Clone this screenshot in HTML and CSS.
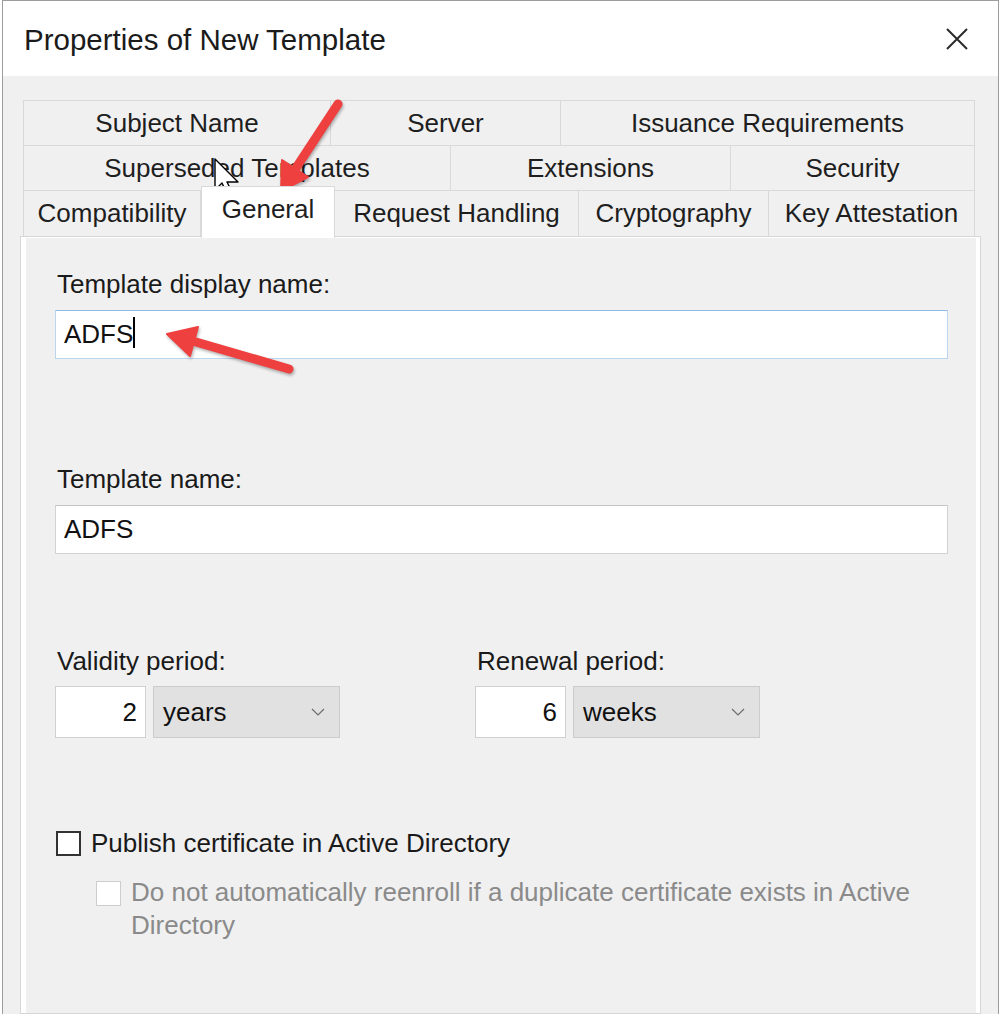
FILE: index.html
```html
<!DOCTYPE html>
<html>
<head>
<meta charset="utf-8">
<title>Properties of New Template</title>
<link rel="stylesheet" href="styles.css">
</head>
<body>
<div class="window">
  <div class="titlebar">
    <span class="title">Properties of New Template</span>
    <svg class="close" width="22" height="22" viewBox="0 0 22 22"><path d="M1 1 L21 21 M21 1 L1 21" stroke="#2b2b2b" stroke-width="2" fill="none"/></svg>
  </div>
  <div class="client">
    <div class="tabs">
      <div class="tabrow">
        <div class="tab w307">Subject Name</div>
        <div class="tab w230">Server</div>
        <div class="tab w414">Issuance Requirements</div>
      </div>
      <div class="tabrow">
        <div class="tab w427">Superseded Templates</div>
        <div class="tab w280">Extensions</div>
        <div class="tab w244">Security</div>
      </div>
      <div class="tabrow last">
        <div class="tab w177">Compatibility</div>
        <div class="tab w134 selected">General</div>
        <div class="tab w244">Request Handling</div>
        <div class="tab w190">Cryptography</div>
        <div class="tab w206">Key Attestation</div>
      </div>
    </div>
    <div class="panel">
      <div class="label">Template display name:</div>
      <div class="field focused first">ADFS<span class="caret"></span></div>
      <div class="label gap-lg">Template name:</div>
      <div class="field first">ADFS</div>
      <div class="periods">
        <div class="period">
          <div class="label">Validity period:</div>
          <div class="controls">
            <div class="spin">2</div>
            <div class="select"><span>years</span><svg width="14" height="8" viewBox="0 0 14 8"><polyline points="1,1 7,7 13,1" fill="none" stroke="#6d6d6d" stroke-width="1.2"/></svg></div>
          </div>
        </div>
        <div class="period">
          <div class="label">Renewal period:</div>
          <div class="controls">
            <div class="spin">6</div>
            <div class="select"><span>weeks</span><svg width="14" height="8" viewBox="0 0 14 8"><polyline points="1,1 7,7 13,1" fill="none" stroke="#6d6d6d" stroke-width="1.2"/></svg></div>
          </div>
        </div>
      </div>
      <div class="check1">
        <span class="box"></span>
        <span class="check-label">Publish certificate in Active Directory</span>
      </div>
      <div class="check2">
        <span class="box disabled"></span>
        <span class="check-label dim">Do not automatically reenroll if a duplicate certificate exists in Active Directory</span>
      </div>
    </div>
  </div>
</div>
<svg class="overlay" width="1002" height="1014" viewBox="0 0 1002 1014">
  <g class="arrows" fill="#ef4040" stroke="#ef4040">
    <line x1="338" y1="104" x2="296" y2="168" stroke-width="9" stroke-linecap="round"/>
    <polygon points="281,191 308,177 282,160" stroke-width="2" stroke-linejoin="round"/>
    <line x1="289" y1="369" x2="196" y2="342" stroke-width="9" stroke-linecap="round"/>
    <polygon points="167,334 198,327 190,356" stroke-width="2" stroke-linejoin="round"/>
  </g>
  <path d="M215 159 L215 190 L222 183 L227 194 L232 192 L227 182 L238 182 Z" fill="#fff" stroke="#000" stroke-width="1.4" stroke-linejoin="round"/>
</svg>
</body>
</html>
```

FILE: styles.css
```css
html, body {
  margin: 0;
  height: 1014px;
  overflow: hidden;
  background: #fff;
  font-family: "Liberation Sans", Arial, sans-serif;
  color: #1a1a1a;
}

.window {
  margin-left: 2px;
  width: 997px;
  height: 1014px;
  box-sizing: border-box;
  border: 1px solid #9c9c9c;
  border-bottom: none;
  background: #f0f0f0;
  display: flex;
  flex-direction: column;
}

.titlebar {
  height: 75px;
  flex: none;
  background: #fff;
  display: flex;
  align-items: center;
  justify-content: space-between;
  padding: 0 30px 0 21px;
}

.title {
  font-size: 29.5px;
  color: #1b1b1b;
  padding-top: 2px;
}

.client {
  flex: 1;
  padding: 24px 0 0 17px;
  display: flex;
  flex-direction: column;
}

.tabs {
  margin-left: 3px;
  width: 952px;
  box-sizing: border-box;
  border-left: 1px solid #d9d9d9;
}

.tabrow {
  display: flex;
  border-top: 1px solid #d9d9d9;
  height: 44px;
}

.tabrow.last {
  height: 45px;
}

.tab {
  box-sizing: border-box;
  border-right: 1px solid #d9d9d9;
  text-align: center;
  font-size: 26px;
  line-height: 44px;
  color: #1e1e1e;
  white-space: nowrap;
}

.tabrow.last .tab {
  line-height: 45px;
}

.w307 { width: 307px; }
.w230 { width: 230px; }
.w414 { width: 414px; }
.w427 { width: 427px; }
.w280 { width: 280px; }
.w244 { width: 244px; }
.w177 { width: 177px; }
.w134 { width: 134px; }
.w190 { width: 190px; }
.w206 { width: 206px; }

.tab.selected {
  position: relative;
  z-index: 1;
  background: #fff;
  height: 52px;
  margin-top: -5px;
  margin-bottom: -2px;
  padding-bottom: 7px;
  border: 1px solid #d9d9d9;
  border-bottom: none;
  line-height: 45px;
}

.panel {
  flex: 1;
  width: 961px;
  box-sizing: border-box;
  border: 1px solid #d6d6d6;
  box-shadow: inset 5px 1px 0 #fff, inset -4px 0 0 #fff;
  padding: 32px 0 0 34px;
}

.label {
  font-size: 26px;
  line-height: 30px;
  padding-left: 2px;
  color: #1a1a1a;
}

.label.gap-lg {
  margin-top: 105px;
}

.field {
  width: 893px;
  height: 49px;
  box-sizing: border-box;
  border: 1px solid #d2d2d2;
  border-top-color: #c4c4c4;
  background: #fff;
  padding-left: 8px;
  font-size: 26px;
  line-height: 47px;
  color: #111;
}

.field.first {
  margin-top: 11px;
}

.field.focused {
  border-color: #bcd5ef;
  border-top-color: #8fbbe8;
}

.caret {
  display: inline-block;
  width: 2px;
  height: 31px;
  background: #000;
  vertical-align: -5px;
}

.periods {
  display: flex;
  margin-top: 92px;
}

.period {
  width: 420px;
}

.controls {
  display: flex;
  gap: 7px;
  margin-top: 10px;
}

.spin {
  width: 91px;
  height: 52px;
  box-sizing: border-box;
  border: 1px solid #d0d0d0;
  background: #fff;
  text-align: right;
  padding-right: 8px;
  font-size: 26px;
  line-height: 50px;
  color: #111;
}

.select {
  width: 187px;
  height: 52px;
  box-sizing: border-box;
  border: 1px solid #cccccc;
  background: #e1e1e1;
  padding: 0 14px 0 9px;
  display: flex;
  align-items: center;
  justify-content: space-between;
  font-size: 26px;
  color: #111;
}

.select span {
  line-height: 50px;
}

.check1 {
  margin-top: 90px;
  height: 30px;
  display: flex;
  align-items: center;
  gap: 10px;
  margin-left: 1px;
}

.box {
  flex: none;
  width: 25px;
  height: 25px;
  box-sizing: border-box;
  border: 2px solid #333;
  background: #fff;
}

.box.disabled {
  border: 1px solid #cdcdcd;
  margin-top: 5px;
}

.check-label {
  font-size: 26px;
  line-height: 30px;
  color: #1a1a1a;
}

.check2 {
  margin-top: 18px;
  margin-left: 41px;
  display: flex;
  align-items: flex-start;
  gap: 10px;
  width: 852px;
}

.check-label.dim {
  color: #8a8a8a;
  line-height: 33px;
  max-width: 817px;
}

.overlay {
  position: absolute;
  left: 0;
  top: 0;
  pointer-events: none;
}

.arrows {
  filter: drop-shadow(1px 2px 1.5px rgba(0, 0, 0, 0.3));
}
```
